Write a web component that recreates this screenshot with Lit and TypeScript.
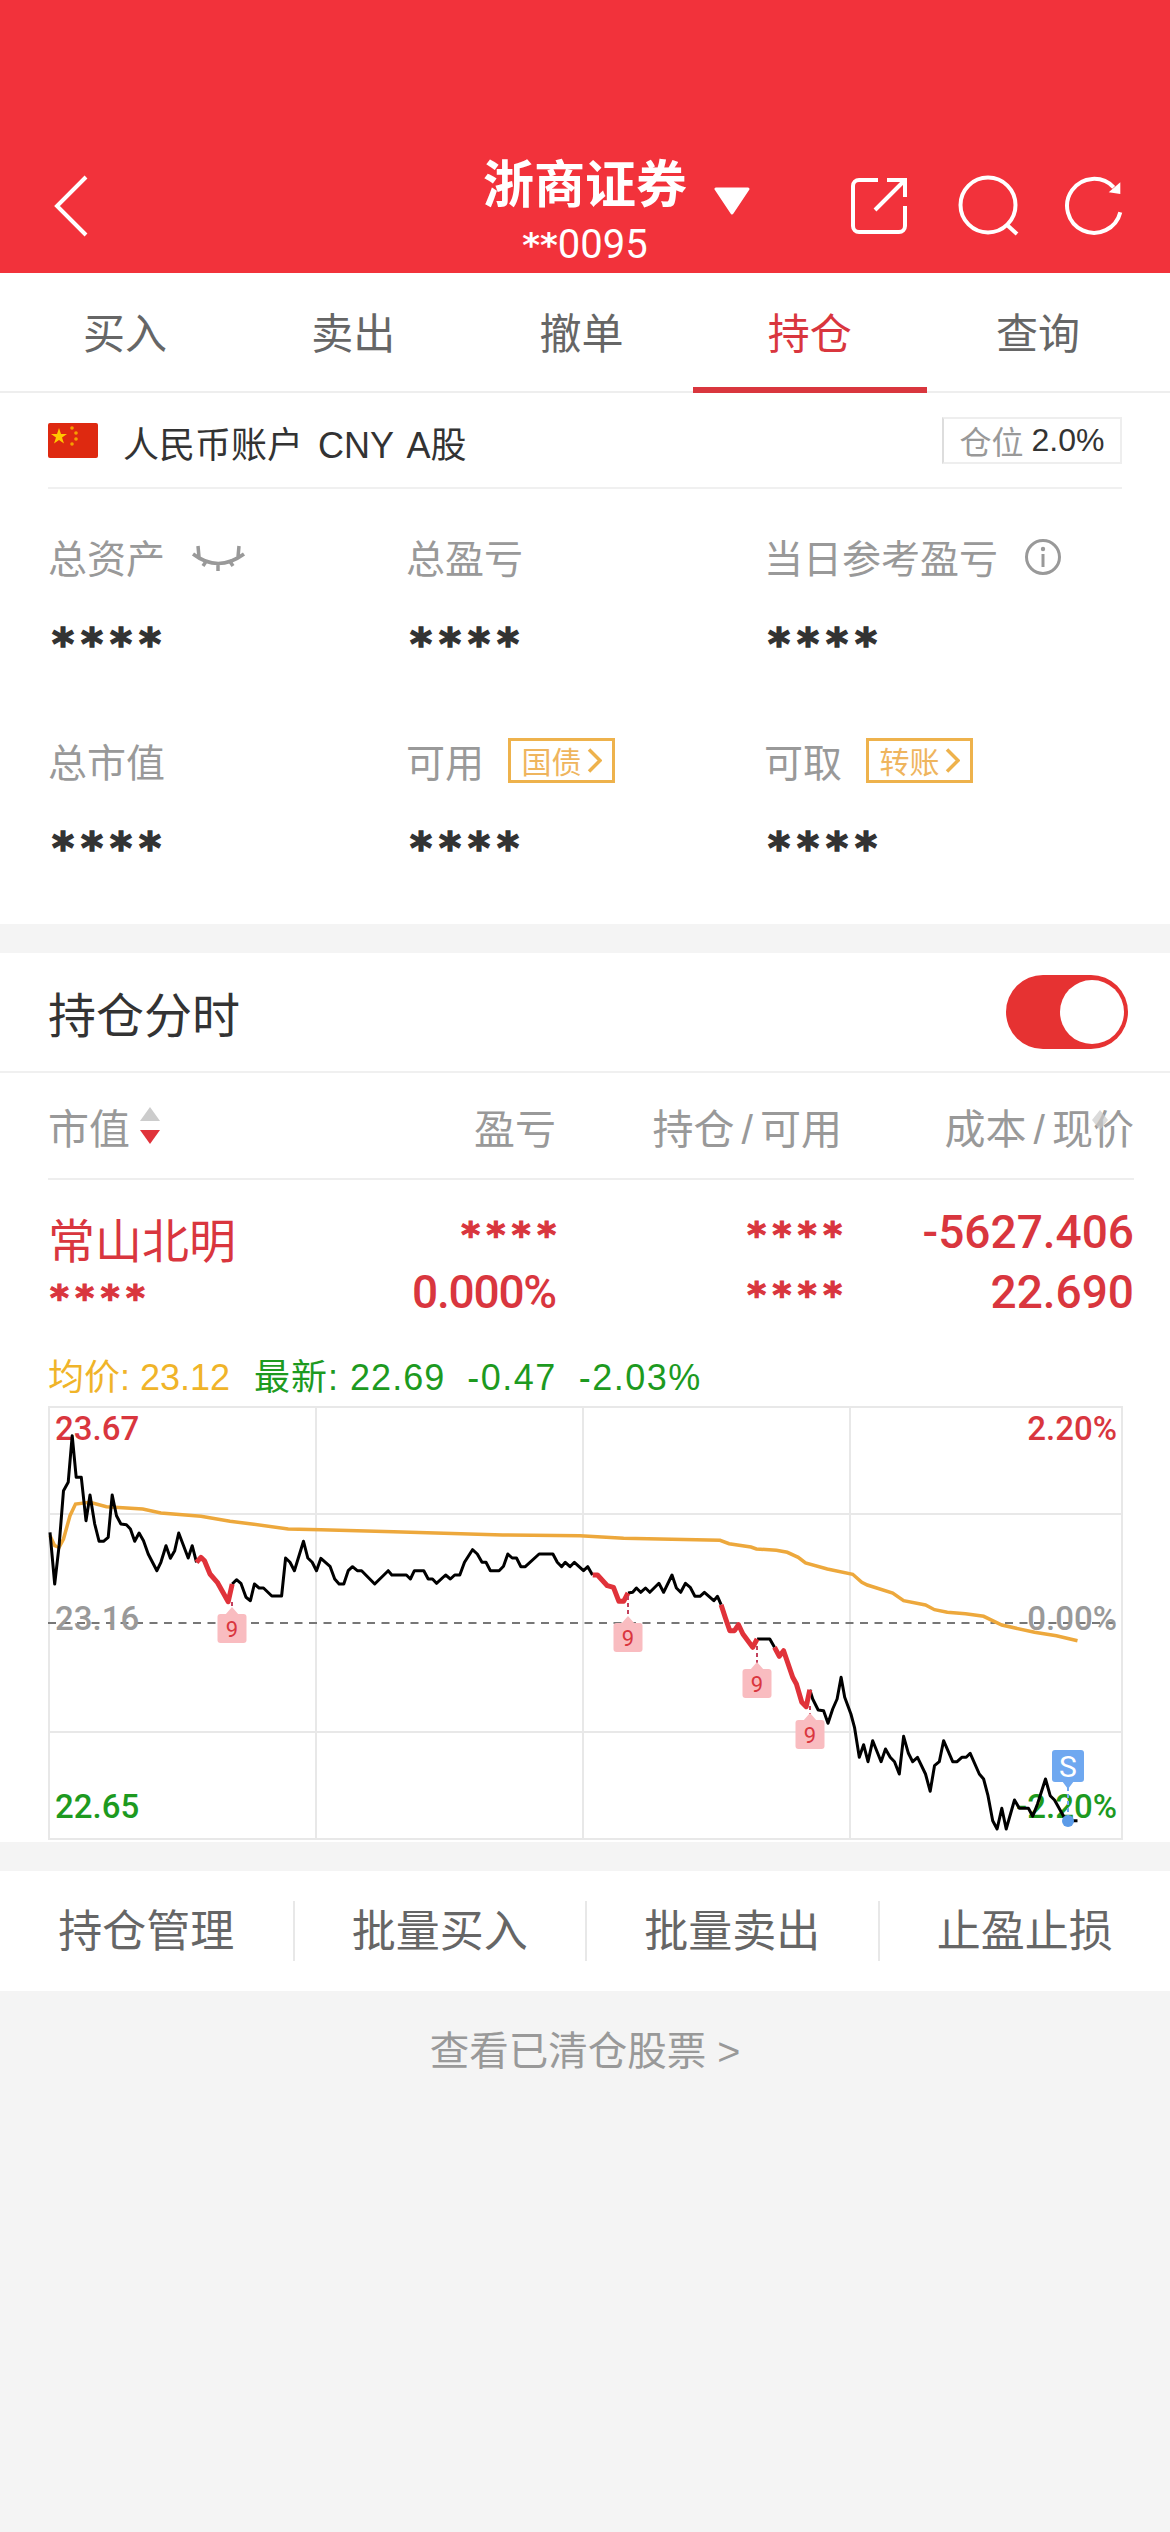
import { LitElement, html, css, svg } from "lit";
import { customElement } from "lit/decorators.js";

// chart traces were read off the reference crops, so they keep the crop scale
const leftX = (x: number) => 30 + x / 2.75;
const rightX = (x: number) => 580 + x / 2.75;
const toY = (y: number) => 1340 + y / 3;

function trace(raw: string, mapX: (x: number) => number) {
  return raw
    .trim()
    .split(/\s+/)
    .map((p) => {
      const [x, y] = p.split(",").map(Number);
      return `${mapX(x).toFixed(1)},${toY(y).toFixed(1)}`;
    })
    .join(" ");
}

const AVG_LINE =
  trace(
    "55,590 68,620 80,625 92,600 110,530 125,495 165,490 210,503 310,510 360,522 470,532 550,547 610,555 710,570 800,572 1000,578 1300,588 1512,590",
    leftX
  ) +
  " " +
  trace(
    "0,590 120,598 385,604 410,614 470,624 485,630 540,634 570,640 600,655 620,672 680,690 750,706 775,730 790,738 860,762 890,785 950,798 975,812 1010,820 1060,824 1110,832 1160,858 1250,880 1310,890 1368,905",
    rightX
  );

const BLACK = [
  trace(
    "55,580 68,735 80,620 92,455 105,430 116,290 127,415 141,415 154,545 165,468 178,555 190,607 202,607 215,595 226,468 238,530 250,555 265,557 276,570 288,607 300,582 312,605 325,645 349,695 360,670 374,620 386,658 398,635 409,582 435,657 446,620 458,670",
    leftX
  ),
  trace(
    "556,735 568,722 580,733 594,775 606,785 617,735 630,747 642,747 665,771 692,771 703,657 715,670 727,695 752,607 764,657 776,670 788,695 800,658 825,682 838,720 850,735 863,735 875,695 887,683 900,695 912,695 948,735 985,695 995,708 1035,708 1046,720 1057,695 1083,695 1095,720 1107,720 1118,733 1143,708 1156,720 1168,708 1182,708 1195,670 1217,632 1230,645 1243,670 1254,670 1266,695 1290,695 1302,682 1314,645 1326,657 1338,657 1350,683 1362,683 1400,645 1438,645 1450,670 1462,683 1472,670 1485,683 1497,670 1522,695 1534,683 1547,708",
    leftX
  ),
  trace(
    "132,762 145,760 155,747 167,760 180,747 192,760 217,733 230,760 253,708 265,747 277,760 290,733 303,745 316,772 330,772 342,760 368,785 378,772 388,797",
    rightX
  ),
  trace("487,900 522,900 535,925", rightX),
  trace(
    "632,1052 640,1080 655,1113 670,1115 682,1153 695,1110 707,1080 718,1015 728,1075 745,1125 755,1165 768,1255 780,1217 792,1268 805,1205 828,1268 840,1230 853,1255 865,1268 878,1305 890,1192 903,1243 915,1268 928,1255 950,1305 963,1357 975,1280 988,1268 1000,1205 1025,1268 1037,1268 1050,1255 1062,1255 1073,1243 1098,1305 1110,1320 1122,1370 1135,1445 1147,1470 1160,1408 1172,1470 1195,1383 1208,1408 1233,1408 1245,1432 1258,1395 1280,1320 1293,1370 1305,1383 1330,1432 1343,1445 1368,1445",
    rightX
  ),
];

const RED = [
  trace("458,670 470,655 480,665 495,705 515,730 545,788 556,735", leftX),
  trace("35,708 48,708 75,740 92,745 107,787 120,787 132,762", rightX),
  trace("388,797 400,838 412,875 425,875 436,857 448,885 475,925 487,900", rightX),
  trace("535,925 548,952 560,935 585,1015 595,1035 610,1090 622,1103 632,1052", rightX),
];

const NINE_TAGS = [
  { cx: 232, top: 1615, from: 1603 },
  { cx: 628, top: 1624, from: 1597 },
  { cx: 757, top: 1670, from: 1647 },
  { cx: 810, top: 1721, from: 1707 },
];

const TABS = ["买入", "卖出", "撤单", "持仓", "查询"];
const ACTIONS = ["持仓管理", "批量买入", "批量卖出", "止盈止损"];
const STARS = "****";

@customElement("app-root")
export class AppRoot extends LitElement {
  static styles = css`
    :host {
      display: block;
      width: 1170px;
      min-height: 2532px;
      background: #f4f4f4;
      font-family: "Liberation Sans", "Noto Sans CJK SC", sans-serif;
      color: #333;
    }
    svg {
      display: block;
    }

    .header {
      height: 273px;
      box-sizing: border-box;
      padding: 153px 46px 0 46px;
      background: #f2323b;
      color: #fff;
      display: grid;
      grid-template-columns: 1fr auto 1fr;
      align-items: start;
    }
    .back {
      margin: 22px 0 0 8px;
    }
    .title {
      text-align: center;
    }
    .title-main {
      font-size: 51px;
      line-height: 66px;
      font-weight: 700;
    }
    .title-sub {
      margin-top: 9px;
      font-size: 40px;
      line-height: 34px;
      font-family: Roboto, sans-serif;
    }
    .title-sub b {
      font-family: "DejaVu Sans", sans-serif;
      font-size: 34px;
      vertical-align: 1px;
    }
    .header-right {
      display: flex;
      align-items: flex-start;
    }
    .caret {
      margin: 34px 0 0 27px;
    }
    .icons {
      margin-left: auto;
      display: flex;
      gap: 47px;
      align-items: flex-start;
      padding-top: 25px;
    }

    .tabs {
      height: 120px;
      box-sizing: border-box;
      padding: 0 18px 0 11px;
      background: #fff;
      border-bottom: 2px solid #eee;
      display: grid;
      grid-template-columns: repeat(5, 1fr);
    }
    .tab {
      position: relative;
      height: 120px;
      line-height: 124px;
      text-align: center;
      font-size: 42px;
      color: #666;
    }
    .tab.active {
      color: #d9363e;
    }
    .tab.active::after {
      content: "";
      position: absolute;
      left: -3px;
      right: -3px;
      bottom: 0;
      height: 6px;
      background: #d9363e;
    }

    .assets {
      background: #fff;
      padding: 0 48px 53px;
    }
    .account {
      height: 96px;
      box-sizing: border-box;
      border-bottom: 2px solid #f0f0f0;
      display: flex;
      align-items: center;
    }
    .account-name {
      margin: 4px 0 0 25px;
      font-size: 36px;
      color: #333;
      word-spacing: 5px;
    }
    .ratio {
      margin-left: auto;
      width: 180px;
      height: 47px;
      box-sizing: border-box;
      border: 2px solid #eee;
      border-left-color: #ddd;
      display: flex;
      align-items: center;
      justify-content: center;
      font-size: 32px;
      color: #333;
      gap: 8px;
    }
    .ratio span {
      color: #999;
    }
    .asset-grid {
      padding-top: 45px;
      display: grid;
      grid-template-columns: 358px 358px 1fr;
      row-gap: 71px;
    }
    .label-row {
      height: 44px;
      display: flex;
      align-items: center;
      font-size: 39px;
      color: #999;
    }
    .label-row svg {
      margin-left: 26px;
    }
    .stars {
      font-family: "DejaVu Sans", sans-serif;
      font-weight: 700;
      font-size: 42px;
      letter-spacing: 7px;
      line-height: 44px;
      margin: 45px 0 0 4px;
      color: #333;
      height: 44px;
      -webkit-text-stroke: 1.5px #333;
    }
    .badge {
      margin-left: 24px;
      width: 107px;
      height: 45px;
      box-sizing: border-box;
      border: 3px solid #eeb24c;
      display: flex;
      align-items: center;
      justify-content: center;
      gap: 5px;
      font-size: 30px;
      color: #efb55e;
    }
    .label-row .badge svg {
      margin-left: 0;
    }

    .holdings {
      margin-top: 29px;
      background: #fff;
    }
    .holdings-head {
      height: 120px;
      box-sizing: border-box;
      padding: 0 42px 0 48px;
      border-bottom: 2px solid #f0f0f0;
      display: flex;
      align-items: center;
      justify-content: space-between;
      font-size: 48px;
      color: #333;
    }
    .toggle {
      width: 122px;
      height: 74px;
      box-sizing: border-box;
      padding: 5px 4px;
      border-radius: 37px;
      background: #e63232;
      display: flex;
      justify-content: flex-end;
    }
    .knob {
      width: 64px;
      height: 64px;
      border-radius: 50%;
      background: #fff;
    }
    .columns,
    .stock {
      display: grid;
      grid-template-columns: 300px 208px 286px 292px;
      margin: 0 36px 0 48px;
    }
    .columns {
      height: 107px;
      align-items: center;
      border-bottom: 2px solid #eee;
      box-sizing: border-box;
      font-size: 41px;
      color: #999;
      text-align: right;
    }
    .slash {
      margin: 0 7px;
    }
    .col-first {
      display: flex;
      align-items: center;
      gap: 9px;
    }
    .col-last {
      position: relative;
    }
    .ghost-sort {
      position: absolute;
      right: 26px;
      top: 14px;
      opacity: 0.7;
    }
    .stock {
      height: 120px;
      padding-top: 22px;
      grid-template-rows: 60px 60px;
      align-items: center;
      text-align: right;
      color: #d9363e;
      font-family: Roboto, "Noto Sans CJK SC", sans-serif;
      font-weight: 500;
      font-size: 46px;
      box-sizing: content-box;
    }
    .stock-pct {
      letter-spacing: -1.2px;
    }
    .stock-name {
      text-align: left;
      padding-top: 10px;
      font-family: "Liberation Sans", "Noto Sans CJK SC", sans-serif;
      font-weight: 400;
      font-size: 47px;
    }
    .stock .red-stars {
      font-family: "DejaVu Sans", sans-serif;
      font-weight: 700;
      font-size: 36px;
      letter-spacing: 6.5px;
      margin: 6px -6.5px 0 0;
      line-height: 60px;
      -webkit-text-stroke: 1.2px #d9363e;
    }
    .stock .red-stars.left {
      text-align: left;
      margin: 12px 0 0 2px;
    }
    .quote {
      height: 50px;
      margin-top: 31px;
      padding-left: 48px;
      display: flex;
      align-items: baseline;
      line-height: 50px;
      font-size: 36px;
      color: #1d9a1f;
    }
    .quote .avg {
      color: #f0b429;
      margin-right: 24px;
    }
    .quote .latest {
      letter-spacing: 1px;
    }
    .quote .chg {
      margin-left: 22px;
      letter-spacing: 1.5px;
    }
    .chart {
      margin-top: 3px;
    }
    .chart text {
      font-family: Roboto, sans-serif;
      font-weight: 500;
      font-size: 33px;
    }
    .chart .tag-text {
      font-size: 22px;
      font-weight: 400;
      text-anchor: middle;
    }

    .actions {
      margin-top: 29px;
      height: 120px;
      background: #fff;
      display: grid;
      grid-template-columns: repeat(4, 1fr);
      align-items: center;
    }
    .action {
      height: 60px;
      line-height: 62px;
      text-align: center;
      font-size: 44px;
      color: #666;
      border-left: 2px solid #e8e8e8;
    }
    .action:first-child {
      border-left: none;
    }
    .cleared {
      margin-top: 40px;
      height: 40px;
      line-height: 40px;
      text-align: center;
      font-size: 39.5px;
      color: #999;
    }
  `;

  private renderChart() {
    return html`
      <svg class="chart" width="1170" height="436" viewBox="0 1407 1170 436">
        <g stroke="#e8e8e8" stroke-width="2" fill="none">
          <rect x="49" y="1408" width="1073" height="432"></rect>
          <path d="M316 1408V1840M583 1408V1840M850 1408V1840M49 1515H1122M49 1733H1122"></path>
        </g>
        <path d="M48 1624H1120" stroke="#777" stroke-width="2" stroke-dasharray="8 6.5" fill="none"></path>
        <text x="55" y="1441" fill="#d9363e">23.67</text>
        <text x="55" y="1631" fill="#999">23.16</text>
        <text x="55" y="1819" fill="#1d9a1f">22.65</text>
        <text x="1117" y="1441" fill="#d9363e" text-anchor="end">2.20%</text>
        <text x="1117" y="1631" fill="#999" text-anchor="end">0.00%</text>
        <text x="1117" y="1819" fill="#1d9a1f" text-anchor="end">-2.20%</text>
        <polyline points=${AVG_LINE} fill="none" stroke="#eda83c" stroke-width="3.5"></polyline>
        ${BLACK.map(
          (p) => svg`<polyline points=${p} fill="none" stroke="#000" stroke-width="3" stroke-linejoin="round"></polyline>`
        )}
        ${RED.map(
          (p) => svg`<polyline points=${p} fill="none" stroke="#e0323a" stroke-width="5" stroke-linejoin="round"></polyline>`
        )}
        ${NINE_TAGS.map(
          (t) => svg`
            <path d="M${t.cx} ${t.from}V${t.top - 6}" stroke="#c2405c" stroke-width="2" stroke-dasharray="4 3"></path>
            <rect x=${t.cx - 14.5} y=${t.top} width="29" height="29" rx="3" fill="#f9bcc0"></rect>
            <path d="M${t.cx} ${t.top - 7}l7 8h-14z" fill="#f9bcc0"></path>
            <text class="tag-text" x=${t.cx} y=${t.top + 23} fill="#d9363e">9</text>
          `
        )}
        <path d="M1068 1788V1820" stroke="#6fa8f0" stroke-width="2" stroke-dasharray="4 3"></path>
        <circle cx="1068" cy="1822" r="6" fill="#5b9be8"></circle>
        <rect x="1052" y="1751" width="32" height="32" rx="3" fill="#6fa8f0"></rect>
        <path d="M1068 1790l-6-8h12z" fill="#6fa8f0"></path>
        <text x="1068" y="1778" fill="#fff" text-anchor="middle" style="font-size:30px;font-weight:400">S</text>
      </svg>
    `;
  }

  private renderAsset(label: unknown) {
    return html`<div>
      <div class="label-row">${label}</div>
      <div class="stars">${STARS}</div>
    </div>`;
  }

  render() {
    const chevron = html`<svg width="15" height="25" viewBox="0 0 15 25">
      <path d="M2 1.500L13 12.500L2 23.500" fill="none" stroke="#eeb24c" stroke-width="3.500"></path>
    </svg>`;
    return html`
      <div class="header">
        <svg class="back" width="36" height="62" viewBox="0 0 36 62">
          <path d="M32 2L3 31L32 60" fill="none" stroke="#fff" stroke-width="4"></path>
        </svg>
        <div class="title">
          <div class="title-main">浙商证券</div>
          <div class="title-sub"><b>**</b>0095</div>
        </div>
        <div class="header-right">
          <svg class="caret" width="36" height="28" viewBox="0 0 36 28">
            <path d="M2 2H34L18 26Z" fill="#fff" stroke="#fff" stroke-width="3" stroke-linejoin="round"></path>
          </svg>
          <div class="icons">
            <svg width="56" height="56" viewBox="0 0 56 56" fill="none" stroke="#fff" stroke-width="4">
              <path d="M27 2H8a6 6 0 0 0-6 6V48a6 6 0 0 0 6 6H48a6 6 0 0 0 6-6V28"></path>
              <path d="M24 32L53 3M36 2H54V19"></path>
            </svg>
            <svg width="62" height="64" viewBox="0 0 62 64" fill="none" stroke="#fff" stroke-width="4" style="margin-top:-6px;margin-left:4px">
              <circle cx="30" cy="33" r="27.5"></circle>
              <path d="M48 52L59 62"></path>
            </svg>
            <svg width="60" height="60" viewBox="0 0 60 60" fill="none" style="margin-top:-3px;margin-left:-3px">
              <path d="M56.3 37.3A27 27 0 1 1 49.7 12.3" stroke="#fff" stroke-width="4"></path>
              <path d="M56.3 19L44.7 17.3L56.3 7.3Z" fill="#fff"></path>
            </svg>
          </div>
        </div>
      </div>

      <div class="tabs">
        ${TABS.map((t) => html`<div class="tab ${t === "持仓" ? "active" : ""}">${t}</div>`)}
      </div>

      <div class="assets">
        <div class="account">
          <svg width="50" height="35" viewBox="0 0 50 35">
            <rect width="50" height="35" rx="2" fill="#de2910"></rect>
            <path d="M11 5l2 6h6l-5 3.600 2 6-5-3.700-5 3.700 2-6-5-3.600h6z" fill="#ffc800"></path>
            <circle cx="24" cy="5" r="1.800" fill="#f5a000"></circle>
            <circle cx="28" cy="10" r="1.800" fill="#f5a000"></circle>
            <circle cx="28" cy="16" r="1.800" fill="#f5a000"></circle>
            <circle cx="24" cy="21" r="1.800" fill="#f5a000"></circle>
          </svg>
          <div class="account-name">人民币账户 CNY A股</div>
          <div class="ratio"><span>仓位</span>2.0%</div>
        </div>
        <div class="asset-grid">
          ${this.renderAsset(html`总资产
            <svg width="56" height="30" viewBox="0 0 56 30" fill="none" stroke="#999" stroke-width="3.500" style="margin-top:3px">
              <path d="M2 11Q27 30 53 11M7 3L8 14M48 3L47 14M16 17L12 23M38 17L42 23M27 19V28"></path>
            </svg>`)}
          ${this.renderAsset("总盈亏")}
          ${this.renderAsset(html`当日参考盈亏
            <svg width="38" height="38" viewBox="0 0 38 38" style="margin:1px 0 0 26px">
              <circle cx="19" cy="19" r="16.500" fill="none" stroke="#999" stroke-width="3"></circle>
              <circle cx="19" cy="11" r="2.200" fill="#999"></circle>
              <rect x="17.500" y="16" width="3" height="13" fill="#999"></rect>
            </svg>`)}
          ${this.renderAsset("总市值")}
          ${this.renderAsset(html`可用<span class="badge">国债${chevron}</span>`)}
          ${this.renderAsset(html`可取<span class="badge">转账${chevron}</span>`)}
        </div>
      </div>

      <div class="holdings">
        <div class="holdings-head">
          <span>持仓分时</span>
          <div class="toggle"><div class="knob"></div></div>
        </div>
        <div class="columns">
          <div class="col-first">
            市值
            <svg width="22" height="38" viewBox="0 0 22 38">
              <path d="M11 0L21 14H1Z" fill="#ccc"></path>
              <path d="M1 23H21L11 37Z" fill="#e0323a"></path>
            </svg>
          </div>
          <div>盈亏</div>
          <div>持仓<span class="slash">/</span>可用</div>
          <div class="col-last">
            成本<span class="slash">/</span>现价
            <svg class="ghost-sort" width="16" height="20" viewBox="0 0 16 20">
              <path d="M8 0L16 10L8 20L0 10Z" fill="#ccc"></path>
            </svg>
          </div>
        </div>
        <div class="stock">
          <div class="stock-name">常山北明</div>
          <div class="red-stars">${STARS}</div>
          <div class="red-stars">${STARS}</div>
          <div>-5627.406</div>
          <div class="red-stars left">${STARS}</div>
          <div class="stock-pct">0.000%</div>
          <div class="red-stars">${STARS}</div>
          <div>22.690</div>
        </div>
        <div class="quote">
          <span class="avg">均价: 23.12</span>
          <span class="latest">最新: 22.69</span>
          <span class="chg">-0.47</span>
          <span class="chg">-2.03%</span>
        </div>
        ${this.renderChart()}
      </div>

      <div class="actions">
        ${ACTIONS.map((a) => html`<div class="action">${a}</div>`)}
      </div>
      <div class="cleared">查看已清仓股票 &gt;</div>
    `;
  }
}
